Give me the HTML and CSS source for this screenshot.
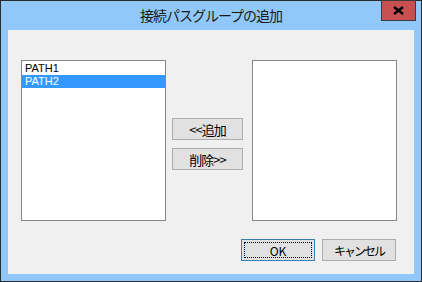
FILE: index.html
```html
<!DOCTYPE html>
<html lang="ja">

<head>
  <meta charset="utf-8">
  <title>接続パスグループの追加</title>
  <link rel="stylesheet" href="styles.css">
</head>

<body>
  <!-- Dialog window -->
  <div class="dialog">
    <div class="title-bar">
      <span class="title-text">接続パスグループの追加</span>
      <button class="close-btn" aria-label="閉じる">
        <svg width="11" height="9" viewBox="0 0 11 9">
          <path d="M1 1 L10 8 M10 1 L1 8" stroke="#000" stroke-width="2.4" />
        </svg>
      </button>
    </div>

    <div class="client">
      <div class="lists-row">
        <!-- Available paths -->
        <ul class="listbox">
          <li class="list-item">PATH1</li>
          <li class="list-item selected">PATH2</li>
        </ul>

        <div class="move-buttons">
          <button class="win-btn move-btn">&lt;&lt;追加</button>
          <button class="win-btn move-btn">削除&gt;&gt;</button>
        </div>

        <!-- Group members -->
        <ul class="listbox"></ul>
      </div>

      <div class="footer">
        <button class="win-btn footer-btn default-btn"><span class="focus-ring">OK</span></button>
        <button class="win-btn footer-btn cancel-btn">キャンセル</button>
      </div>
    </div>
  </div>
</body>

</html>
```

FILE: styles.css
```css
body {
  margin: 0;
  background-color: #8fc8f9;
  font-family: "Liberation Sans", "Noto Sans CJK JP", sans-serif;
}

/* Window frame */
.dialog {
  width: 420px;
  height: 280px;
  border: 1px solid #2b2b2b;
  background-color: #8fc8f9;
  display: flex;
  flex-direction: column;
}

.title-bar {
  position: relative;
  height: 29px;
  display: flex;
  align-items: center;
  justify-content: center;
}

.title-text {
  font-family: "Noto Sans CJK JP", sans-serif;
  font-size: 14px;
  letter-spacing: -1px;
  color: #1a1a1a;
  margin-top: -2px;
}

.close-btn {
  position: absolute;
  top: -1px;
  right: 5px;
  width: 35px;
  height: 21px;
  padding: 0;
  background-color: #c75050;
  border: 1px solid #3c3c3c;
  display: flex;
  align-items: center;
  justify-content: center;
}

/* Client area */
.client {
  margin: 0 7px 7px 7px;
  flex-grow: 1;
  background-color: #f0f0f0;
  padding: 30px 0 0 13px;
}

.lists-row {
  display: flex;
  align-items: flex-start;
}

.listbox {
  width: 143px;
  height: 158px;
  margin: 0;
  padding: 1px 0 0 0;
  list-style: none;
  background-color: #fff;
  border: 1px solid #828790;
}

.list-item {
  height: 13px;
  line-height: 13px;
  font-size: 11px;
  padding-left: 3px;
  color: #000;
}

.list-item.selected {
  background-color: #3399ff;
  color: #fff;
}

.move-buttons {
  display: flex;
  flex-direction: column;
  gap: 8px;
  margin: 58px 9px 0 6px;
}

/* Standard push button */
.win-btn {
  height: 22px;
  padding: 0;
  background-color: #e1e1e1;
  border: 1px solid #adadad;
  font-family: "Noto Sans CJK JP", sans-serif;
  font-size: 12px;
  color: #000;
}

.move-btn {
  width: 71px;
  font-size: 13px;
  letter-spacing: -1px;
}

.footer {
  display: flex;
  gap: 7px;
  margin: 18px 0 0 220px;
}

.footer-btn {
  width: 74px;
}

.cancel-btn {
  letter-spacing: -2px;
}

.default-btn {
  border-color: #3c7fb1;
  padding: 2px;
}

.focus-ring {
  display: flex;
  align-items: center;
  justify-content: center;
  height: 100%;
  border: 1px dotted #000;
  box-sizing: border-box;
}
```
